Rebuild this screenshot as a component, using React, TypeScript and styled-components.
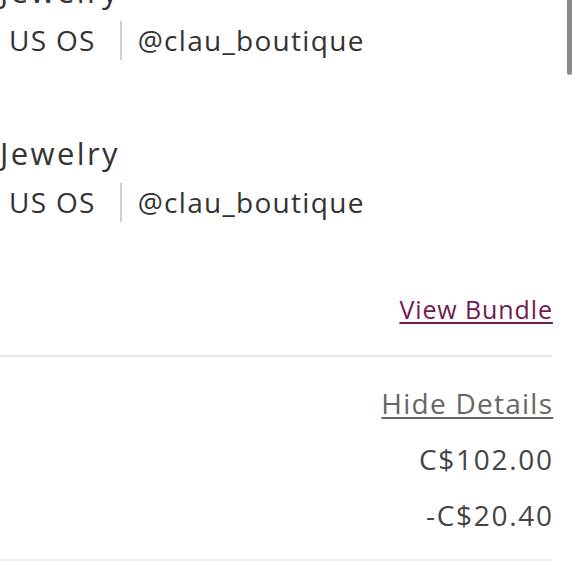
import React from "react";
import styled, { createGlobalStyle } from "styled-components";

const Global = createGlobalStyle`
  html, body { margin: 0; padding: 0; background: #ffffff; overflow: hidden; }
  body { font-family: "Open Sans", Lato, "Liberation Sans", sans-serif; }
`;

const Page = styled.div`
  position: relative;
  width: 580px;
  height: 580px;
  overflow: hidden;
  box-sizing: border-box;
  padding-right: 28px;
`;

const ItemList = styled.div`
  display: flex;
  flex-direction: column;
  gap: 73px;
  margin-top: -29px;
`;

const Item = styled.div`
  display: flex;
  flex-direction: column;
  gap: 9px;
`;

const Title = styled.div`
  font-size: 31px;
  line-height: 40px;
  letter-spacing: 2.4px;
  color: #333333;
  white-space: nowrap;
`;

const Meta = styled.div`
  display: flex;
  align-items: center;
  height: 40px;
  padding-left: 9px;
  font-size: 28px;
  line-height: 40px;
  letter-spacing: 1.3px;
  color: #333333;
  white-space: nowrap;
`;

const MetaDivider = styled.span`
  width: 2px;
  height: 39px;
  background: #cfcfcf;
  margin: 0 16px 0 24px;
`;

const LinkRow = styled.div`
  display: flex;
  justify-content: flex-end;
  margin-top: 71px;
`;

const TextLink = styled.a<{ $color: string; $size: number; $track: number }>`
  font-size: ${(p) => p.$size}px;
  line-height: 32px;
  letter-spacing: ${(p) => p.$track}px;
  margin-right: -${(p) => p.$track}px;
  color: ${(p) => p.$color};
  text-decoration: underline;
  text-decoration-thickness: 2px;
  text-underline-offset: 3px;
  cursor: pointer;
`;

const Rule = styled.hr<{ $color: string; $top: number }>`
  border: none;
  height: 2px;
  margin: ${(p) => p.$top}px 0 0 0;
  background: ${(p) => p.$color};
`;

const Details = styled.div`
  display: flex;
  flex-direction: column;
  align-items: flex-end;
  margin-top: 30px;
`;

const Price = styled.div`
  font-size: 28px;
  line-height: 40px;
  letter-spacing: 1.7px;
  margin-right: -1.7px;
  color: #444444;
  margin-top: 16px;
  &:first-of-type {
    margin-top: 20px;
  }
`;

const Scrollbar = styled.div`
  position: absolute;
  top: -10px;
  right: 8px;
  width: 5px;
  height: 85px;
  border-radius: 3px;
  background: #8a8a8a;
`;

const items = [
  { title: "Jewelry", size: "US OS", seller: "@clau_boutique" },
  { title: "Jewelry", size: "US OS", seller: "@clau_boutique" },
];

export default function App() {
  return (
    <>
      <Global />
      <Page>
        <ItemList>
          {items.map((it, i) => (
            <Item key={i}>
              <Title>{it.title}</Title>
              <Meta>
                <span>{it.size}</span>
                <MetaDivider />
                <span>{it.seller}</span>
              </Meta>
            </Item>
          ))}
        </ItemList>
        <LinkRow>
          <TextLink $color="#731b4f" $size={25} $track={0.9}>
            View Bundle
          </TextLink>
        </LinkRow>
        <Rule $color="#e6e6e6" $top={30} />
        <Details>
          <TextLink $color="#666666" $size={28} $track={1.25}>
            Hide Details
          </TextLink>
          <Price>C$102.00</Price>
          <Price>-C$20.40</Price>
        </Details>
        <Rule $color="#f1efec" $top={24} />
        <Scrollbar />
      </Page>
    </>
  );
}
